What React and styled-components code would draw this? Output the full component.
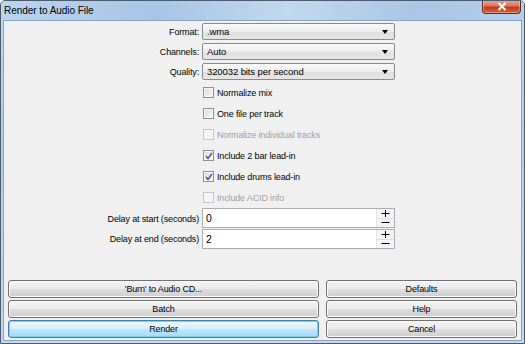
import React from "react";
import styled, { createGlobalStyle } from "styled-components";

const GlobalStyle = createGlobalStyle`
  html, body {
    margin: 0;
    padding: 0;
    background: #fff;
  }
  body {
    font-family: "Liberation Sans", Arial, sans-serif;
  }
`;

const Frame = styled.div`
  width: 525px;
  height: 344px;
  box-sizing: border-box;
  border: 1px solid #4b5b70;
  border-radius: 5px 5px 0 0;
  background: linear-gradient(180deg, #c3d8ef 0%, #b4cde9 40%, #c4d9ef 100%);
  display: flex;
  flex-direction: column;
  overflow: hidden;
`;

const TitleBar = styled.div`
  height: 19px;
  display: flex;
  align-items: flex-start;
  justify-content: space-between;
  padding: 0 3px 0 3px;
  background: linear-gradient(90deg, #bcd4ee 0%, #a7c5e6 30%, #c2d8ef 55%, #a9c6e6 80%, #b6cfeb 100%);
`;

const Title = styled.span`
  font-size: 10px;
  line-height: 19px;
  color: #000;
  letter-spacing: -0.05px;
`;

const CloseButton = styled.div`
  width: 37px;
  height: 13px;
  margin-top: -1px;
  border: 1px solid #5a2a24;
  border-top: none;
  border-radius: 0 0 4px 4px;
  background: linear-gradient(180deg, #e9a99c 0%, #d8775f 45%, #c1391c 55%, #d2643c 100%);
  display: flex;
  align-items: center;
  justify-content: center;
  box-shadow: inset 0 0 0 1px rgba(255, 255, 255, 0.35);
`;

const Client = styled.div`
  flex: 1;
  margin: 0 2px 2px 2px;
  border: 1px solid #8da2bd;
  background: #f0f0f0;
  display: flex;
  flex-direction: column;
  padding: 2px 3px 2px 0;
  font-size: 9px;
  color: #000;
`;

const Form = styled.div`
  display: grid;
  grid-template-columns: 195px 193px;
  column-gap: 3px;
  align-items: center;
`;

const Label = styled.label`
  text-align: right;
  white-space: nowrap;
  letter-spacing: -0.15px;
  margin-bottom: ${(p) => (p.$gap ? "3px" : "0")};
`;

const Select = styled.div`
  height: 17px;
  box-sizing: border-box;
  border: 1px solid #8a8a8a;
  border-radius: 2px;
  background: linear-gradient(180deg, #fafafa 0%, #ececec 50%, #dfdfdf 51%, #e6e6e6 100%);
  display: flex;
  align-items: center;
  justify-content: space-between;
  padding: 0 6px 0 4px;
  margin-bottom: ${(p) => (p.$gap ? "3px" : "0")};
  font-size: 9.5px;
  letter-spacing: -0.1px;
`;

const Arrow = styled.span`
  width: 0;
  height: 0;
  border-left: 3.5px solid transparent;
  border-right: 3.5px solid transparent;
  border-top: 4px solid #000;
`;

const Checks = styled.div`
  grid-column: 2;
  display: flex;
  flex-direction: column;
  margin-top: 2px;
`;

const CheckRow = styled.div`
  height: 21px;
  display: flex;
  align-items: center;
  gap: 3px;
  padding-left: 1px;
  color: ${(p) => (p.$disabled ? "#a0a0a0" : "#000")};
  letter-spacing: -0.15px;
`;

const Box = styled.span`
  width: 11px;
  height: 11px;
  box-sizing: border-box;
  border: 1px solid ${(p) => (p.$disabled ? "#c5c5c5" : "#8f8f8f")};
  background: ${(p) =>
    p.$disabled
      ? "#f4f4f4"
      : "linear-gradient(135deg, #d8d8d8 0%, #f0f0f0 70%, #ffffff 100%)"};
  box-shadow: inset 0 0 0 1px #f6f6f6;
  display: flex;
  align-items: center;
  justify-content: center;
`;

const SpinBox = styled.div`
  height: 20px;
  box-sizing: border-box;
  border: 1px solid #abadb3;
  background: #fff;
  display: flex;
  align-items: stretch;
  margin-bottom: ${(p) => (p.$gap ? "1px" : "0")};
`;

const SpinValue = styled.span`
  flex: 1;
  padding-left: 3px;
  line-height: 18px;
  font-size: 10.5px;
`;

const SpinButtons = styled.div`
  width: 17px;
  border-left: 1px solid #e2e2e2;
  display: flex;
  flex-direction: column;
`;

const SpinButton = styled.span`
  flex: 1;
  display: flex;
  align-items: center;
  justify-content: center;
  background: #f4f4f4;
  border-bottom: ${(p) => (p.$top ? "1px solid #e0e0e0" : "none")};
`;

const Footer = styled.div`
  margin-top: auto;
  display: grid;
  grid-template-columns: 311px 191px;
  column-gap: 7px;
  row-gap: 2px;
  padding-left: 4px;
`;

const Button = styled.div`
  height: 18px;
  box-sizing: border-box;
  border: 1px solid ${(p) => (p.$default ? "#3c7fb1" : "#707070")};
  border-radius: 3px;
  background: ${(p) =>
    p.$default
      ? "linear-gradient(180deg, #eaf6fd 0%, #d9f0fc 50%, #bee6fd 51%, #a7d9f5 100%)"
      : "linear-gradient(180deg, #f2f2f2 0%, #ebebeb 50%, #dddddd 51%, #cfcfcf 100%)"};
  box-shadow: inset 0 0 0 1px ${(p) => (p.$default ? "#7ad0f5" : "#fbfbfb")};
  display: flex;
  align-items: center;
  justify-content: center;
  letter-spacing: -0.15px;
`;

const Check = () => (
  <svg width="8" height="8" viewBox="0 0 8 8">
    <path d="M1 4 L3 6.5 L7 1" fill="none" stroke="#4a5f97" strokeWidth="1.6" />
  </svg>
);

const CloseX = () => (
  <svg width="10" height="9" viewBox="0 0 10 9">
    <path d="M1.5 1 L8.5 8 M8.5 1 L1.5 8" stroke="#fff" strokeWidth="2" />
  </svg>
);

const Plus = () => (
  <svg width="9" height="7" viewBox="0 0 9 7">
    <path d="M0.5 3.5 H8.5 M4.5 0 V7" stroke="#000" strokeWidth="1" />
  </svg>
);

const Minus = () => (
  <svg width="9" height="3" viewBox="0 0 9 3">
    <path d="M0.5 1.5 H8.5" stroke="#000" strokeWidth="1" />
  </svg>
);

const selects = [
  { label: "Format:", value: ".wma" },
  { label: "Channels:", value: "Auto" },
  { label: "Quality:", value: "320032 bits per second" },
];

const checks = [
  { label: "Normalize mix", checked: false },
  { label: "One file per track", checked: false },
  { label: "Normalize individual tracks", disabled: true },
  { label: "Include 2 bar lead-in", checked: true },
  { label: "Include drums lead-in", checked: true },
  { label: "Include ACID info", disabled: true },
];

const spins = [
  { label: "Delay at start (seconds)", value: "0" },
  { label: "Delay at end (seconds)", value: "2" },
];

const buttons = [
  { label: "'Burn' to Audio CD..." },
  { label: "Defaults" },
  { label: "Batch" },
  { label: "Help" },
  { label: "Render", primary: true },
  { label: "Cancel" },
];

export default function App() {
  return (
    <>
      <GlobalStyle />
      <Frame>
        <TitleBar>
          <Title>Render to Audio File</Title>
          <CloseButton>
            <CloseX />
          </CloseButton>
        </TitleBar>
        <Client>
          <Form>
            {selects.map((s, i) => (
              <React.Fragment key={s.label}>
                <Label $gap={i < 2}>{s.label}</Label>
                <Select $gap={i < 2}>
                  <span>{s.value}</span>
                  <Arrow />
                </Select>
              </React.Fragment>
            ))}
            <Checks>
              {checks.map((c) => (
                <CheckRow key={c.label} $disabled={c.disabled}>
                  <Box $disabled={c.disabled}>{c.checked && <Check />}</Box>
                  <span>{c.label}</span>
                </CheckRow>
              ))}
            </Checks>
            {spins.map((s, i) => (
              <React.Fragment key={s.label}>
                <Label>{s.label}</Label>
                <SpinBox $gap={i === 0}>
                  <SpinValue>{s.value}</SpinValue>
                  <SpinButtons>
                    <SpinButton $top>
                      <Plus />
                    </SpinButton>
                    <SpinButton>
                      <Minus />
                    </SpinButton>
                  </SpinButtons>
                </SpinBox>
              </React.Fragment>
            ))}
          </Form>
          <Footer>
            {buttons.map((b) => (
              <Button key={b.label} $default={b.primary}>
                {b.label}
              </Button>
            ))}
          </Footer>
        </Client>
      </Frame>
    </>
  );
}
